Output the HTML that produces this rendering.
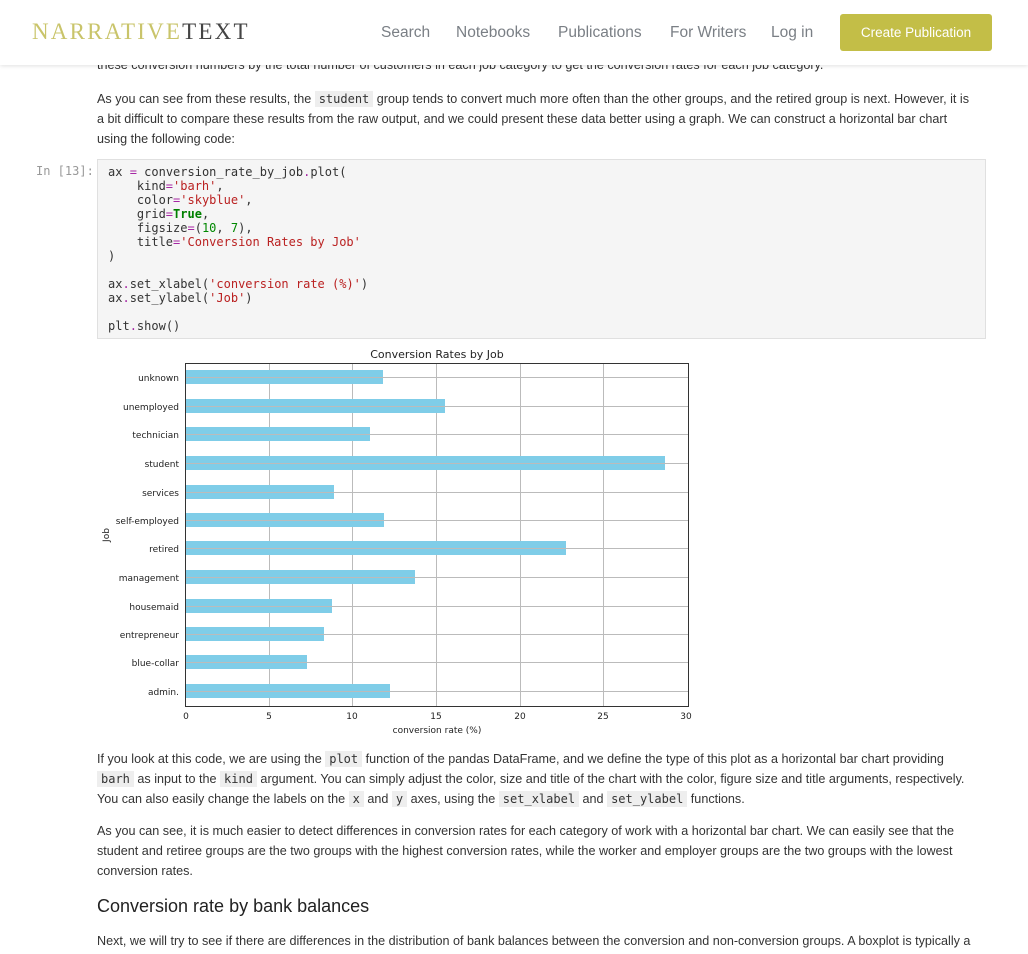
<!DOCTYPE html>
<html><head><meta charset="utf-8"><style>
body{margin:0;width:1028px;height:954px;overflow:hidden;background:#fff;font-family:"Liberation Sans",Arial,sans-serif;color:#333;font-size:12.6px;position:relative}
.nav{position:absolute;top:0;left:0;width:1028px;height:65px;background:#fff;box-shadow:0 1px 4px rgba(0,0,0,.12);z-index:5}
.logo{position:absolute;left:32px;top:19px;font-family:"Liberation Serif",serif;font-size:23px;letter-spacing:2.2px}
.nav a{position:absolute;top:24px;font-size:15.5px;color:#7a7f85}
.btn{position:absolute;left:840px;top:14px;width:152px;height:37px;background:#c3be47;color:#fff;border-radius:3px;font-size:13.5px;text-align:center;line-height:37px}
p{position:absolute;left:97px;width:885px;margin:0;line-height:20px}
code{font-family:"DejaVu Sans Mono",monospace;background:#eee;padding:1px 4px;font-size:12px;color:#333}
.cell{position:absolute;left:97px;top:159px;width:887px;height:178px;background:#f5f5f5;border:1px solid #e0e0e0}
pre{margin:0;position:absolute;left:10px;top:5px;font-family:"DejaVu Sans Mono",monospace;font-size:12px;line-height:14px;color:#333}
.o{color:#a626a4}.s{color:#ba2121}.k{color:#008000;font-weight:bold}.n{color:#080}
h3{position:absolute;left:97px;top:896px;margin:0;font-weight:normal;font-size:18px;color:#222}
</style></head><body>
<div class="nav">
<div class="logo"><span style="color:#c9c46a">NARRATIVE</span><span style="color:#444">TEXT</span></div>
<a style="left:381px">Search</a><a style="left:456px">Notebooks</a><a style="left:558px">Publications</a><a style="left:670px">For Writers</a><a style="left:771px">Log in</a>
<div class="btn">Create Publication</div>
</div>
<p style="top:55px">these conversion numbers by the total number of customers in each job category to get the conversion rates for each job category.</p>
<p style="top:89px;width:876px">As you can see from these results, the <code>student</code> group tends to convert much more often than the other groups, and the retired group is next. However, it is a bit difficult to compare these results from the raw output, and we could present these data better using a graph. We can construct a horizontal bar chart using the following code:</p>
<div style="position:absolute;left:36px;top:164px;font-family:'DejaVu Sans Mono',monospace;font-size:12px;color:#999">In [13]:</div>
<div class="cell"><pre>ax <span class="o">=</span> conversion_rate_by_job<span class="o">.</span>plot(
    kind<span class="o">=</span><span class="s">'barh'</span>,
    color<span class="o">=</span><span class="s">'skyblue'</span>,
    grid<span class="o">=</span><span class="k">True</span>,
    figsize<span class="o">=</span>(<span class="n">10</span>, <span class="n">7</span>),
    title<span class="o">=</span><span class="s">'Conversion Rates by Job'</span>
)

ax<span class="o">.</span>set_xlabel(<span class="s">'conversion rate (%)'</span>)
ax<span class="o">.</span>set_ylabel(<span class="s">'Job'</span>)

plt<span class="o">.</span>show()</pre></div>
<svg style="position:absolute;left:0;top:0" width="1028" height="954" font-family="DejaVu Sans,sans-serif" font-size="9" fill="#222">
<text x="437" y="358" font-size="11" text-anchor="middle">Conversion Rates by Job</text>
<g stroke="#bbb" stroke-width="1">
<line x1="269.5" y1="363" x2="269.5" y2="706"/><line x1="352.5" y1="363" x2="352.5" y2="706"/><line x1="436.5" y1="363" x2="436.5" y2="706"/><line x1="520.5" y1="363" x2="520.5" y2="706"/><line x1="603.5" y1="363" x2="603.5" y2="706"/>
</g>
<g fill="#7fcde8">
<rect x="186" y="370" width="197" height="14"/><rect x="186" y="399" width="259" height="14"/><rect x="186" y="427" width="184" height="14"/><rect x="186" y="456" width="479" height="14"/><rect x="186" y="485" width="148" height="14"/><rect x="186" y="513" width="198" height="14"/><rect x="186" y="541" width="380" height="14"/><rect x="186" y="570" width="229" height="14"/><rect x="186" y="599" width="146" height="14"/><rect x="186" y="627" width="138" height="14"/><rect x="186" y="655" width="121" height="14"/><rect x="186" y="684" width="204" height="14"/>
</g>
<g stroke="#bbb" stroke-width="1">
<line x1="186" x2="688" y1="377.5" y2="377.5"/><line x1="186" x2="688" y1="406.5" y2="406.5"/><line x1="186" x2="688" y1="434.5" y2="434.5"/><line x1="186" x2="688" y1="463.5" y2="463.5"/><line x1="186" x2="688" y1="492.5" y2="492.5"/><line x1="186" x2="688" y1="520.5" y2="520.5"/><line x1="186" x2="688" y1="548.5" y2="548.5"/><line x1="186" x2="688" y1="577.5" y2="577.5"/><line x1="186" x2="688" y1="606.5" y2="606.5"/><line x1="186" x2="688" y1="634.5" y2="634.5"/><line x1="186" x2="688" y1="662.5" y2="662.5"/><line x1="186" x2="688" y1="691.5" y2="691.5"/>
</g>
<rect x="185.5" y="363.5" width="503" height="343" fill="none" stroke="#333"/>
<g text-anchor="end">
<text x="179" y="381">unknown</text><text x="179" y="410">unemployed</text><text x="179" y="438">technician</text><text x="179" y="467">student</text><text x="179" y="496">services</text><text x="179" y="524">self-employed</text><text x="179" y="552">retired</text><text x="179" y="581">management</text><text x="179" y="610">housemaid</text><text x="179" y="638">entrepreneur</text><text x="179" y="666">blue-collar</text><text x="179" y="695">admin.</text>
</g>
<g text-anchor="middle">
<text x="186" y="719">0</text><text x="269" y="719">5</text><text x="352" y="719">10</text><text x="436" y="719">15</text><text x="520" y="719">20</text><text x="603" y="719">25</text><text x="686" y="719">30</text>
<text x="437" y="733">conversion rate (%)</text>
</g>
<text transform="translate(109,535) rotate(-90)" text-anchor="middle">Job</text>
</svg>
<p style="top:749px">If you look at this code, we are using the <code>plot</code> function of the pandas DataFrame, and we define the type of this plot as a horizontal bar chart providing <code>barh</code> as input to the <code>kind</code> argument. You can simply adjust the color, size and title of the chart with the color, figure size and title arguments, respectively. You can also easily change the labels on the <code>x</code> and <code>y</code> axes, using the <code>set_xlabel</code> and <code>set_ylabel</code> functions.</p>
<p style="top:821px">As you can see, it is much easier to detect differences in conversion rates for each category of work with a horizontal bar chart. We can easily see that the student and retiree groups are the two groups with the highest conversion rates, while the worker and employer groups are the two groups with the lowest conversion rates.</p>
<h3>Conversion rate by bank balances</h3>
<p style="top:931px">Next, we will try to see if there are differences in the distribution of bank balances between the conversion and non-conversion groups. A boxplot is typically a</p>
</body></html>
